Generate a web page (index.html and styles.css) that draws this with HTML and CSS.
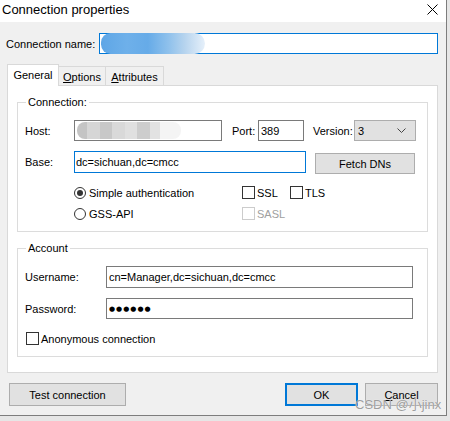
FILE: index.html
```html
<!DOCTYPE html>
<html>
<head>
<meta charset="utf-8">
<link rel="stylesheet" href="styles.css">
</head>
<body>
<div class="window">
  <div class="titlebar">
    <span class="title">Connection properties</span>
    <svg class="close" width="11" height="11" viewBox="0 0 11 11"><path d="M0.5 0.5 L10.5 10.5 M10.5 0.5 L0.5 10.5" stroke="#000" stroke-width="1" fill="none"/></svg>
  </div>

  <div class="name-row">
    <span class="name-label">Connection name:</span>
    <div class="name-input"><span class="blur-blue"></span></div>
  </div>

  <div class="tabs">
    <div class="tab active">General</div>
    <div class="tab"><u>O</u>ptions</div>
    <div class="tab"><u>A</u>ttributes</div>
  </div>

  <div class="panel">
    <fieldset class="group">
      <legend>Connection:</legend>
      <div class="row r1">
        <span class="lbl w49">Host:</span>
        <div class="field host"><span class="blur-gray"></span></div>
        <span class="lbl port-lbl">Port:</span>
        <div class="field port">389</div>
        <span class="lbl ver-lbl">Version:</span>
        <div class="combo"><span>3</span>
          <svg width="9" height="5" viewBox="0 0 9 5"><path d="M0.5 0.5 L4.5 4.5 L8.5 0.5" stroke="#444" stroke-width="1" fill="none"/></svg>
        </div>
      </div>
      <div class="row r2">
        <span class="lbl w49 base-lbl">Base:</span>
        <div class="field base focus">dc=sichuan,dc=cmcc</div>
        <div class="btn fetch">Fetch DNs</div>
      </div>
      <div class="row r3">
        <span class="w49"></span>
        <span class="opt radio-opt"><span class="radio checked"></span>Simple authentication</span>
        <span class="opt ssl"><span class="check"></span>SSL</span>
        <span class="opt"><span class="check"></span>TLS</span>
      </div>
      <div class="row r4">
        <span class="w49"></span>
        <span class="opt radio-opt"><span class="radio"></span>GSS-API</span>
        <span class="opt disabled"><span class="check"></span>SASL</span>
      </div>
    </fieldset>

    <fieldset class="group account">
      <legend>Account</legend>
      <div class="row u1">
        <span class="lbl w81">Username:</span>
        <div class="field user">cn=Manager,dc=sichuan,dc=cmcc</div>
      </div>
      <div class="row u2">
        <span class="lbl w81">Password:</span>
        <div class="field user pass">●●●●●●</div>
      </div>
      <div class="row u3">
        <span class="opt anon"><span class="check"></span>Anonymous connection</span>
      </div>
    </fieldset>
  </div>

  <div class="buttons">
    <div class="btn test">Test connection</div>
    <div class="btn ok">OK</div>
    <div class="btn cancel"><u>C</u>ancel</div>
  </div>

  <div class="watermark">CSDN @小jinx</div>
</div>
</body>
</html>
```
FILE: styles.css
```css
html {
  background: #e6e6e6;
}
body {
  margin: 0;
  font-family: "Liberation Sans", Arial, "Noto Sans CJK SC", sans-serif;
  font-size: 11px;
  color: #000;
}
.window {
  position: relative;
  width: 446px;
  height: 415px;
  background: #f0f0f0;
  border-right: 1px solid #7d7d7d;
  border-bottom: 1px solid #7d7d7d;
}
.titlebar {
  height: 22px;
  background: #fff;
  display: flex;
  justify-content: space-between;
  align-items: flex-start;
}
.title {
  font-size: 13px;
  line-height: 19px;
  padding-left: 2px;
}
.close {
  margin: 4px 8px 0 0;
}

.name-row {
  display: flex;
  align-items: center;
  margin-top: 11px;
  padding-left: 6px;
}
.name-label {
  width: 93px;
}
.name-input {
  box-sizing: border-box;
  width: 339px;
  height: 21px;
  border: 1px solid #0078d7;
  background: #fff;
  display: flex;
  align-items: center;
}
.blur-blue {
  display: block;
  width: 104px;
  height: 21px;
  margin-left: 1px;
  border-radius: 10px 11px 11px 10px;
  background: linear-gradient(90deg, #5ea6e6 0%, #6eb0ea 25%, #66abe8 45%, #8fc1ec 65%, #b5d3ee 80%, #e6f0fa 100%);
  filter: blur(0.6px);
}

.tabs {
  display: flex;
  align-items: flex-end;
  height: 22px;
  margin: 10px 0 -1px 7px;
  position: relative;
  z-index: 1;
}
.tab {
  box-sizing: border-box;
  height: 20px;
  border: 1px solid #d9d9d9;
  background: #f0f0f0;
  display: flex;
  align-items: center;
  justify-content: center;
  padding-top: 2px;
  margin-left: -1px;
}
.tab:nth-child(2) { width: 48px; }
.tab:nth-child(3) { width: 59px; }
.tab.active {
  width: 52px;
  height: 22px;
  margin-left: 0;
  background: #fff;
  border-bottom: none;
  padding-top: 0;
  padding-bottom: 2px;
}

.panel {
  box-sizing: border-box;
  width: 431px;
  height: 288px;
  margin-left: 7px;
  border: 1px solid #d9d9d9;
  background: #fff;
  padding: 0 9px;
}
.group {
  margin: 9px 0 0;
  padding: 0 0 7px 7px;
  border: 1px solid #dcdcdc;
  min-inline-size: 0;
}
.group legend {
  margin-left: 1px;
  padding: 0 2px;
  line-height: 14px;
}
.row {
  display: flex;
  align-items: center;
}
.lbl {
  white-space: nowrap;
}
.w49 { width: 49px; flex: none; }
.w81 { width: 81px; flex: none; }
.r1 { margin-top: 11px; height: 21px; }
.r2 { margin-top: 10px; height: 23px; align-items: flex-start; }
.r3 { margin-top: 8px; height: 21px; }
.r4 { height: 21px; }
.base-lbl { line-height: 22px; }

.field {
  box-sizing: border-box;
  height: 21px;
  border: 1px solid #7a7a7a;
  background: #fff;
  display: flex;
  align-items: center;
  padding-left: 1px;
  white-space: nowrap;
  overflow: hidden;
  flex: none;
}
.field.focus { border-color: #0078d7; }
.host { width: 148px; overflow: visible; }
.blur-gray {
  display: block;
  width: 104px;
  height: 17px;
  margin-left: 1px;
  border-radius: 8px;
  background:
    linear-gradient(90deg, #c4c4c4 0 10%, #d6d6d6 10% 22%, #c8c8c8 22% 34%, #d9d9d9 34% 46%, #e0e0e0 46% 58%, #cdcdcd 58% 70%, #e2e2e2 70% 80%, #f4f4f4 80% 100%);
  filter: blur(0.7px);
}
.port-lbl { width: 26px; margin-left: 10px; }
.port { width: 46px; padding-left: 2px; }
.ver-lbl { width: 41px; margin-left: 9px; }
.combo {
  box-sizing: border-box;
  width: 62px;
  height: 21px;
  background: #e1e1e1;
  border: 1px solid #adadad;
  display: flex;
  align-items: center;
  justify-content: space-between;
  padding: 0 9px 0 3px;
}
.base { width: 232px; height: 22px; }

.btn {
  box-sizing: border-box;
  background: #e1e1e1;
  border: 1px solid #adadad;
  display: flex;
  align-items: center;
  justify-content: center;
  flex: none;
}
.fetch {
  width: 100px;
  height: 21px;
  margin: 2px 0 0 9px;
}

.opt {
  display: flex;
  align-items: center;
  white-space: nowrap;
}
.radio-opt { width: 168px; flex: none; }
.ssl { width: 48px; flex: none; }
.radio {
  box-sizing: border-box;
  width: 12px;
  height: 12px;
  border: 1px solid #333;
  border-radius: 50%;
  margin-right: 3px;
  display: flex;
  align-items: center;
  justify-content: center;
  flex: none;
}
.radio.checked::after {
  content: "";
  width: 6px;
  height: 6px;
  border-radius: 50%;
  background: #333;
}
.check {
  box-sizing: border-box;
  width: 13px;
  height: 13px;
  border: 1px solid #333;
  margin-right: 2px;
  flex: none;
}
.disabled { color: #a0a0a0; }
.disabled .check { border-color: #cccccc; }

.account { margin-top: 9px; }
.u1 { margin-top: 11px; height: 22px; }
.u1 .field { height: 22px; }
.u2 { margin-top: 10px; height: 21px; }
.u3 { margin-top: 9px; height: 21px; }
.user { width: 307px; padding-left: 2px; }
.pass {
  font-family: "DejaVu Sans", sans-serif;
  font-size: 7px;
  letter-spacing: 1px;
}
.anon { margin-left: 1px; }

.buttons {
  display: flex;
  margin-top: 10px;
  padding-left: 9px;
}
.buttons .btn { height: 23px; }
.test { width: 117px; }
.ok {
  width: 73px;
  margin-left: 159px;
  border: 2px solid #0078d7;
}
.cancel {
  width: 73px;
  margin-left: 7px;
}

.watermark {
  position: absolute;
  left: 355px;
  top: 397px;
  font-size: 13px;
  line-height: 16px;
  color: rgba(140, 140, 140, 0.85);
  text-shadow: 0 0 1px #fff;
  white-space: nowrap;
}
```
